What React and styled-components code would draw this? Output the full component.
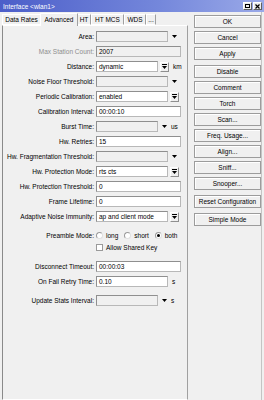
import React from 'react';
import styled, { createGlobalStyle } from 'styled-components';

const GlobalStyle = createGlobalStyle`
    body {
        margin: 0;
        background: #f0f0f0;
    }
`;

const Window = styled.div`
    width: 264px;
    height: 400px;
    overflow: hidden;
    background: #f0f0f0;
    font-family: "Liberation Sans", Arial, sans-serif;
    font-size: 6.5px;
    color: #000;
    display: flex;
    flex-direction: column;
`;

const TitleBar = styled.div`
    height: 12px;
    display: flex;
    align-items: center;
    justify-content: space-between;
    padding: 0 2px 0 3px;
    background: linear-gradient(to right, #4c5ec9, #7487db 60%, #9aa9e8);
`;

const TitleText = styled.span`
    color: #fff;
    font-size: 6.5px;
`;

const TitleButtons = styled.div`
    display: flex;
    gap: 1px;
`;

const TitleBtn = styled.div`
    width: 9px;
    height: 8px;
    background: #ececec;
    border: 1px solid #fff;
    border-right-color: #606060;
    border-bottom-color: #606060;
    box-sizing: border-box;
    display: flex;
    align-items: center;
    justify-content: center;
`;

const Body = styled.div`
    flex: 1;
    display: flex;
`;

const LeftCol = styled.div`
    width: 186px;
    margin-left: 2px;
    display: flex;
    flex-direction: column;
`;

const TabStrip = styled.div`
    height: 13px;
    display: flex;
    align-items: flex-end;
    position: relative;
    z-index: 1;
`;

const Tab = styled.div`
    box-sizing: border-box;
    width: ${({ $w }) => $w}px;
    height: ${({ $active }) => ($active ? 13 : 11)}px;
    margin: ${({ $active }) => ($active ? '0 -1px -1px -1px' : '0')};
    padding-top: ${({ $active }) => ($active ? 2 : 1)}px;
    text-align: center;
    background: #f0f0f0;
    border: 1px solid #fff;
    border-right-color: #a0a0a0;
    border-bottom: ${({ $active }) => ($active ? 'none' : '1px solid #fff')};
    ${({ $active }) => $active && 'z-index: 2;'}
`;

const Panel = styled.div`
    flex: 1;
    box-sizing: border-box;
    border: 1px solid #fff;
    border-left-color: #8a8a8a;
    border-right-color: #a0a0a0;
    display: flex;
    flex-direction: column;
    gap: 4px;
    padding-top: 5px;
`;

const Row = styled.div`
    display: grid;
    grid-template-columns: 91px 1fr;
    column-gap: 2px;
    height: 11px;
    align-items: center;
    margin-top: ${({ $mt }) => $mt || 0}px;
`;

const Label = styled.div`
    text-align: right;
    white-space: nowrap;
    color: ${({ $disabled }) => ($disabled ? '#8d8d8d' : '#000')};
`;

const Fields = styled.div`
    display: flex;
    align-items: center;
    height: 11px;
`;

const Field = styled.div`
    box-sizing: border-box;
    width: ${({ $w }) => $w}px;
    height: 11px;
    padding-left: 2px;
    line-height: 9px;
    white-space: nowrap;
    overflow: hidden;
    background: ${({ $disabled }) => ($disabled ? '#f0f0f0' : '#fff')};
    border: 1px solid #b8b8b8;
    border-top-color: #8f8f8f;
    border-left-color: #8f8f8f;
`;

const ArrowCell = styled.div`
    width: ${({ $w }) => $w || 13}px;
    display: flex;
    justify-content: center;
`;

const SpinBox = styled.div`
    box-sizing: border-box;
    width: 9px;
    height: 10px;
    margin-left: ${({ $ml }) => $ml || 2}px;
    border: 1px solid #fff;
    border-right-color: #8f8f8f;
    border-bottom-color: #8f8f8f;
    display: flex;
    align-items: center;
    justify-content: center;
`;

const Unit = styled.span`
    margin-left: ${({ $ml }) => $ml || 4}px;
`;

const Choice = styled.label`
    display: flex;
    align-items: center;
    gap: 3px;
    margin-right: 6px;
`;

const Radio = styled.span`
    box-sizing: border-box;
    width: 7px;
    height: 7px;
    border-radius: 50%;
    background: #fff;
    border: 1px solid #9a9a9a;
    border-right-color: #e0e0e0;
    border-bottom-color: #e0e0e0;
    display: flex;
    align-items: center;
    justify-content: center;
    &::after {
        content: '';
        width: 3px;
        height: 3px;
        border-radius: 50%;
        background: ${({ $on }) => ($on ? '#000' : 'transparent')};
    }
`;

const Check = styled.span`
    box-sizing: border-box;
    width: 7px;
    height: 7px;
    background: #fff;
    border: 1px solid #9a9a9a;
`;

const RightCol = styled.div`
    width: 67px;
    margin-left: 6px;
    padding-top: 3px;
    display: flex;
    flex-direction: column;
    gap: 3px;
    border-right: 1px solid #c4c4c4;
`;

const Button = styled.div`
    box-sizing: border-box;
    height: 13px;
    margin-top: ${({ $mt }) => $mt || 0}px;
    display: flex;
    align-items: center;
    justify-content: center;
    white-space: nowrap;
    background: #f0f0f0;
    border: 1px solid #9c9c9c;
    box-shadow: inset 1px 1px 0 #fff;
`;

const Down = () => (
  <svg width="5" height="3" viewBox="0 0 5 3">
    <path d="M0 0h5L2.5 3z" fill="#000" />
  </svg>
);

const Expand = () => (
  <svg width="5" height="5" viewBox="0 0 5 5">
    <rect x="0" y="0" width="5" height="1" fill="#000" />
    <path d="M0 2h5L2.5 5z" fill="#000" />
  </svg>
);

const tabs = [
  { name: 'Data Rates', w: 39 },
  { name: 'Advanced', w: 38, active: true },
  { name: 'HT', w: 14 },
  { name: 'HT MCS', w: 33 },
  { name: 'WDS', w: 22 },
  { name: '...', w: 10 },
];

const buttons = [
  { text: 'OK' },
  { text: 'Cancel' },
  { text: 'Apply' },
  { text: 'Disable', mt: 2 },
  { text: 'Comment' },
  { text: 'Torch' },
  { text: 'Scan...' },
  { text: 'Freq. Usage...' },
  { text: 'Align...' },
  { text: 'Sniff...' },
  { text: 'Snooper...' },
  { text: 'Reset Configuration', mt: 2 },
  { text: 'Simple Mode', mt: 2 },
];

const ComboRow = ({ label, value, disabled }) => (
  <Row>
    <Label>{label}</Label>
    <Fields>
      <Field $w={72} $disabled={disabled}>{value}</Field>
      <ArrowCell><Down /></ArrowCell>
    </Fields>
  </Row>
);

const TextRow = ({ label, value, disabled, mt }) => (
  <Row $mt={mt}>
    <Label $disabled={disabled}>{label}</Label>
    <Fields>
      <Field $w={85} $disabled={disabled}>{value}</Field>
    </Fields>
  </Row>
);

const SelectRow = ({ label, value }) => (
  <Row>
    <Label>{label}</Label>
    <Fields>
      <Field $w={72}>{value}</Field>
      <SpinBox $ml={2}><Expand /></SpinBox>
    </Fields>
  </Row>
);

const App = () => {
  return (
    <Window>
      <GlobalStyle />
      <TitleBar>
        <TitleText>Interface &lt;wlan1&gt;</TitleText>
        <TitleButtons>
          <TitleBtn>
            <svg width="5" height="4" viewBox="0 0 5 4">
              <rect x="0.5" y="0.5" width="4" height="3" fill="none" stroke="#000" strokeWidth="1" />
            </svg>
          </TitleBtn>
          <TitleBtn>
            <svg width="5" height="5" viewBox="0 0 5 5">
              <path d="M0.5 0.5L4.5 4.5M4.5 0.5L0.5 4.5" stroke="#000" strokeWidth="1.2" />
            </svg>
          </TitleBtn>
        </TitleButtons>
      </TitleBar>
      <Body>
        <LeftCol>
          <TabStrip>
            {tabs.map((t) => (
              <Tab key={t.name} $w={t.w} $active={t.active}>{t.name}</Tab>
            ))}
          </TabStrip>
          <Panel>
            <ComboRow label="Area:" value="" disabled />
            <TextRow label="Max Station Count:" value="2007" disabled />
            <Row>
              <Label>Distance:</Label>
              <Fields>
                <Field $w={62}>dynamic</Field>
                <SpinBox><Expand /></SpinBox>
                <Unit>km</Unit>
              </Fields>
            </Row>
            <ComboRow label="Noise Floor Threshold:" value="" disabled />
            <SelectRow label="Periodic Calibration:" value="enabled" />
            <TextRow label="Calibration Interval:" value="00:00:10" />
            <Row>
              <Label>Burst Time:</Label>
              <Fields>
                <Field $w={62} $disabled />
                <ArrowCell $w={12}><Down /></ArrowCell>
                <Unit $ml={1}>us</Unit>
              </Fields>
            </Row>
            <TextRow label="Hw. Retries:" value="15" />
            <ComboRow label="Hw. Fragmentation Threshold:" value="" disabled />
            <SelectRow label="Hw. Protection Mode:" value="rts cts" />
            <TextRow label="Hw. Protection Threshold:" value="0" />
            <TextRow label="Frame Lifetime:" value="0" />
            <SelectRow label="Adaptive Noise Immunity:" value="ap and client mode" />
            <Row $mt={4}>
              <Label>Preamble Mode:</Label>
              <Fields>
                <Choice><Radio />long</Choice>
                <Choice><Radio />short</Choice>
                <Choice><Radio $on />both</Choice>
              </Fields>
            </Row>
            <Row $mt={-3}>
              <Label />
              <Fields>
                <Choice><Check />Allow Shared Key</Choice>
              </Fields>
            </Row>
            <TextRow label="Disconnect Timeout:" value="00:00:03" mt={4} />
            <Row>
              <Label>On Fail Retry Time:</Label>
              <Fields>
                <Field $w={72}>0.10</Field>
                <Unit>s</Unit>
              </Fields>
            </Row>
            <Row $mt={4}>
              <Label>Update Stats Interval:</Label>
              <Fields>
                <Field $w={62} $disabled />
                <ArrowCell $w={12}><Down /></ArrowCell>
                <Unit $ml={1}>s</Unit>
              </Fields>
            </Row>
          </Panel>
        </LeftCol>
        <RightCol>
          {buttons.map((b) => (
            <Button key={b.text} $mt={b.mt}>{b.text}</Button>
          ))}
        </RightCol>
      </Body>
    </Window>
  );
};

export default App;
